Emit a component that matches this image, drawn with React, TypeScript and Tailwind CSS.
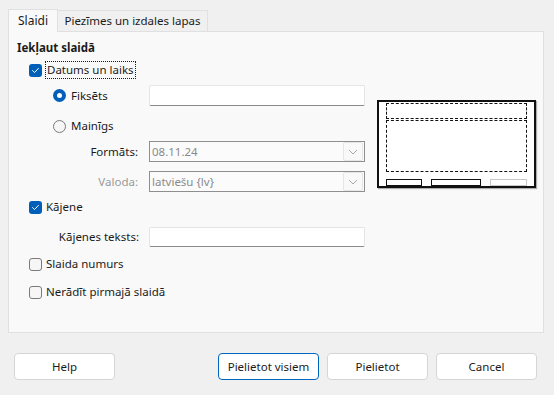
import React from 'react';

function CheckBox({ checked }: { checked?: boolean }) {
  if (checked) {
    return (
      <span className="flex h-[13px] w-[13px] shrink-0 items-center justify-center rounded-[3px] bg-[#005fb8]">
        <svg width="9" height="9" viewBox="0 0 9 9" fill="none">
          <path d="M1.6 4.6 L3.6 6.5 L7.4 2.4" stroke="white" strokeWidth="1" strokeLinecap="round" strokeLinejoin="round" />
        </svg>
      </span>
    );
  }
  return <span className="h-[13px] w-[13px] shrink-0 rounded-[3px] border border-[#7a7a7a] bg-[#f6f6f6]" />;
}

function Radio({ checked }: { checked?: boolean }) {
  if (checked) {
    return (
      <span className="flex h-[13px] w-[13px] shrink-0 items-center justify-center rounded-full bg-[#005fb8]">
        <span className="h-[5px] w-[5px] rounded-full bg-white" />
      </span>
    );
  }
  return <span className="h-[13px] w-[13px] shrink-0 rounded-full border border-[#7a7a7a] bg-[#f6f6f6]" />;
}

function TextInput() {
  return <div className="h-full w-[216px] shrink-0 rounded-[2px] border border-[#e5e5e5] border-b-[#8a8a8a] bg-white" />;
}

function Select({ value }: { value: string }) {
  return (
    <div className="flex h-full w-[216px] shrink-0 items-center border border-[#8f8f8f] bg-[#fbfbfb] pl-[2px]">
      <span className="flex-1 text-[#8a8a8a]">{value}</span>
      <span className="mr-[1px] flex h-[19px] w-[20px] items-center justify-center rounded-[2px] border border-[#e6e6e6] bg-[#f9f9f9]">
        <svg width="10" height="6" viewBox="0 0 10 6" fill="none">
          <path d="M1 1 L5 5 L9 1" stroke="#a8a8a8" strokeWidth="1" />
        </svg>
      </span>
    </div>
  );
}

function Button({ label, primary }: { label: string; primary?: boolean }) {
  return (
    <button
      className={
        primary
          ? 'flex h-[27px] w-[101px] items-center justify-center rounded-[4px] border border-[#0067c0] bg-white'
          : 'flex h-[27px] w-[101px] items-center justify-center rounded-[4px] border border-[#d5d5d5] bg-white'
      }
    >
      {label}
    </button>
  );
}

export default function App() {
  return (
    <div
      className="h-[395px] w-[554px] overflow-hidden whitespace-nowrap bg-[#f0f0f0] text-[11.5px] leading-none text-[#1b1b1b]"
      style={{ fontFamily: '"Noto Sans", "Open Sans", sans-serif' }}
    >
      {/* Tabs */}
      <div className="flex h-[31px] items-end pl-[8px]">
        <div className="relative top-[1px] flex h-[23px] w-[50px] items-center justify-center border border-b-0 border-[#e0e0e0] bg-[#f9f9f9] text-[12px]">
          Slaidi
        </div>
        <div className="flex h-[21px] w-[150px] items-center justify-center border border-b-0 border-l-0 border-[#e0e0e0] bg-[#f0f0f0]">
          Piezīmes un izdales lapas
        </div>
      </div>

      {/* Panel */}
      <div className="mx-[8px] flex h-[302px] w-[536px] border border-[#e0e0e0] bg-[#f9f9f9]">
        <div className="flex w-[356px] shrink-0 flex-col pl-[8px]">
          <div className="mt-[8px] flex h-[16px] items-center font-bold">Iekļaut slaidā</div>

          <div className="mt-[5px] flex h-[18px] items-center pl-[12px]">
            <CheckBox checked />
            <span className="ml-[3px] flex h-[18px] items-center border border-dotted border-[#1b1b1b] px-[1px]">
              Datums un laiks
            </span>
          </div>

          <div className="mt-[6px] flex h-[21px] items-center pl-[36px]">
            <Radio checked />
            <span className="ml-[5px] w-[78px] shrink-0">Fiksēts</span>
            <TextInput />
          </div>

          <div className="mt-[11px] flex h-[18px] items-center pl-[36px]">
            <Radio />
            <span className="ml-[5px]">Mainīgs</span>
          </div>

          <div className="mt-[6px] flex h-[21px] items-center">
            <span className="w-[121px] shrink-0 text-right">Formāts:</span>
            <span className="w-[11px] shrink-0" />
            <Select value="08.11.24" />
          </div>

          <div className="mt-[9px] flex h-[21px] items-center">
            <span className="w-[121px] shrink-0 text-right text-[#9a9a9a]">Valoda:</span>
            <span className="w-[11px] shrink-0" />
            <Select value="latviešu {lv}" />
          </div>

          <div className="mt-[6px] flex h-[18px] items-center pl-[12px]">
            <CheckBox checked />
            <span className="ml-[4px]">Kājene</span>
          </div>

          <div className="mt-[11px] flex h-[20px] items-center">
            <span className="w-[122px] shrink-0 text-right">Kājenes teksts:</span>
            <span className="w-[10px] shrink-0" />
            <TextInput />
          </div>

          <div className="mt-[8px] flex h-[18px] items-center pl-[12px]">
            <CheckBox />
            <span className="ml-[4px]">Slaida numurs</span>
          </div>

          <div className="mt-[10px] flex h-[18px] items-center pl-[12px]">
            <CheckBox />
            <span className="ml-[4px]">Nerādīt pirmajā slaidā</span>
          </div>
        </div>

        {/* Preview */}
        <div className="ml-[12px] mt-[68px] flex h-[88px] w-[159px] shrink-0 flex-col border-2 border-[#111] bg-white px-[7px] pt-[1px] shadow-[1px_1px_1px_rgba(0,0,0,0.3)]">
          <div className="h-[16px] shrink-0 border border-dashed border-[#111]" />
          <div className="mt-[1px] h-[52px] shrink-0 border border-dashed border-[#111]" />
          <div className="mt-[7px] flex h-[7px] shrink-0 gap-[9px]">
            <div className="w-[37px] border border-[#111]" />
            <div className="w-[50px] border border-[#111]" />
            <div className="w-[38px] border border-[#c8c8c8]" />
          </div>
        </div>
      </div>

      {/* Buttons */}
      <div className="mt-[20px] flex px-[14px]">
        <Button label="Help" />
        <div className="ml-[103px] flex gap-[8px]">
          <Button label="Pielietot visiem" primary />
          <Button label="Pielietot" />
          <Button label="Cancel" />
        </div>
      </div>
    </div>
  );
}
